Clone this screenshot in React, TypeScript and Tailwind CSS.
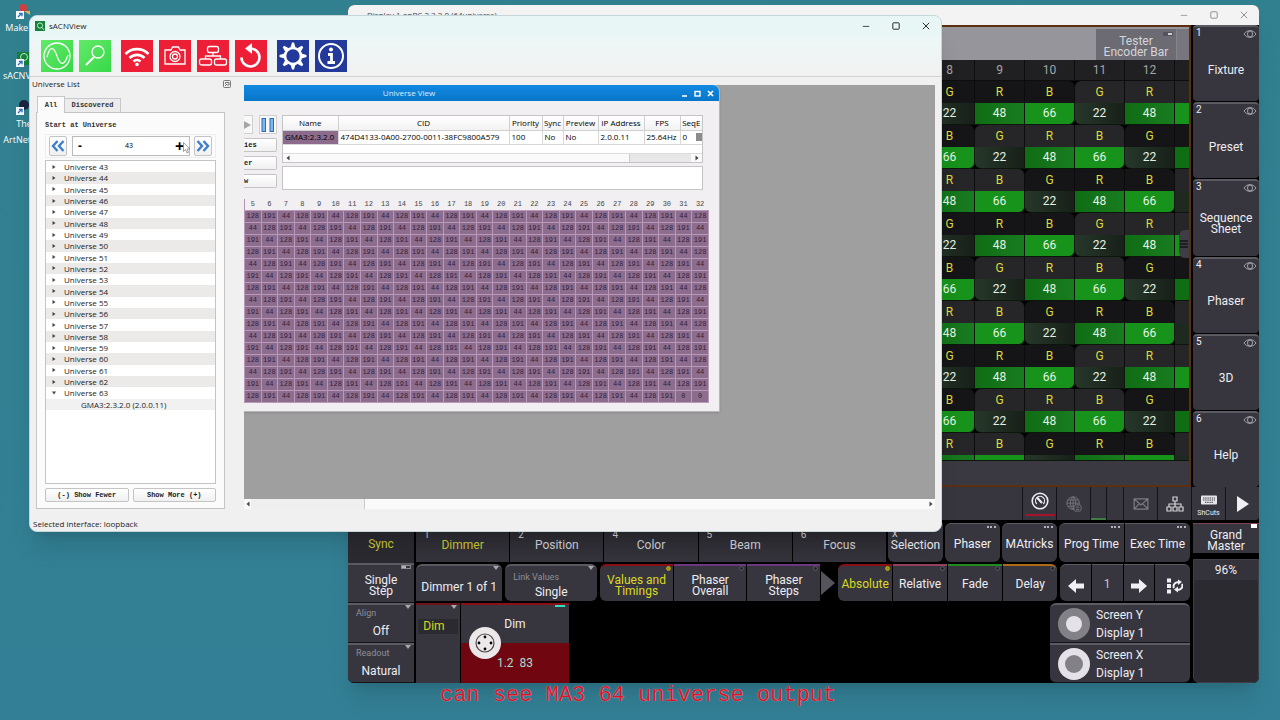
import { useState } from "react";
import type { ReactNode } from "react";
import clsx from "clsx";

const UNIVERSES = Array.from({ length: 21 }, (_, i) => 43 + i);
const LEVELS = [128, 191, 44];
const COLUMNS = Array.from({ length: 28 }, (_, i) => i + 5);
const ROWS = Array.from({ length: 16 }, (_, i) => i);

const SHEET_COLS = [8, 9, 10, 11, 12];
const SHEET_ROWS = [0, 1, 2, 3, 4, 5, 6, 7];
const CHANNELS = [
  { name: "G", value: 22 },
  { name: "R", value: 48 },
  { name: "B", value: 66 },
];

function dmxLevel(row: number, col: number) {
  if (row === 15 && col > 25) return 0;
  return LEVELS[(col - row + 15) % 3];
}

/* ---------- desktop ---------- */

function DesktopIcon({ label, children }: { label: ReactNode; children: ReactNode }) {
  return (
    <a href="#" className="flex w-12 flex-col items-center text-center text-[9px] leading-4 text-white">
      <svg viewBox="0 0 16 16" className="h-4 w-4">
        {children}
        <rect x="0" y="7" width="8" height="8" fill="#f4f8fb" />
        <path d="M2 13l3.5-3.5M3 9.300h3v3" stroke="#2d6fc0" strokeWidth="1.300" fill="none" />
      </svg>
      <span className="whitespace-nowrap">{label}</span>
    </a>
  );
}

function WindowControls({ className }: { className?: string }) {
  return (
    <div className={clsx("flex items-center", className)}>
      <button aria-label="Minimize" className="flex w-[30px] justify-center">
        <svg viewBox="0 0 10 10" className="h-2 w-2" fill="none" stroke="currentColor"><path d="M1 5.500h8" /></svg>
      </button>
      <button aria-label="Maximize" className="flex w-[30px] justify-center">
        <svg viewBox="0 0 10 10" className="h-2 w-2" fill="none" stroke="currentColor" strokeWidth="1.200"><rect x="1" y="1" width="8" height="8" rx="1" /></svg>
      </button>
      <button aria-label="Close" className="flex w-[30px] justify-center">
        <svg viewBox="0 0 10 10" className="h-2 w-2" fill="none" stroke="currentColor" strokeWidth="1.200"><path d="M1 1l8 8M9 1l-8 8" /></svg>
      </button>
    </div>
  );
}

/* ---------- lighting console ---------- */

function ViewButton({ index, label }: { index: number; label: string }) {
  return (
    <button className="relative flex flex-1 items-center justify-center rounded-sm border-t-2 border-[#5c5b63] bg-[#37363f] px-2 pt-3 text-xs leading-[11px]">
      <span className="absolute left-[3px] top-0 text-[10px] leading-3">{index}</span>
      <svg viewBox="0 0 14 10" className="absolute right-0.5 top-0.5 h-2.5 w-3.5" fill="none" stroke="#a4a3aa">
        <path d="M1 5c3-4.500 9-4.500 12 0c-3 4.500-9 4.500-12 0z" />
        <ellipse cx="7" cy="5" rx="2.500" ry="3" />
      </svg>
      {label}
    </button>
  );
}

const GREENS: Record<number, string> = {
  22: "bg-linear-to-r from-[#26382a] to-[#182019]",
  48: "bg-linear-to-r from-[#0f6d14] to-[#197c20]",
  66: "bg-[#17921b]",
};

function FixtureSheet() {
  return (
    <table className="ml-auto w-[264px] table-fixed border-separate border-spacing-0 text-center text-xs">
      <thead>
        <tr className="h-[21px] bg-[#202022] font-normal text-[#a5a5a5]">
          {SHEET_COLS.map((col) => (
            <th key={col} className="w-[50px] border-r border-b border-[#0d0d0d] p-0 font-normal leading-5">{col}</th>
          ))}
          <th className="border-b border-[#0d0d0d] p-0" />
        </tr>
      </thead>
      <tbody>
        {SHEET_ROWS.concat(8).map((row) => [
          <tr key={`name-${row}`} className="h-[22px] text-[#dcda3c]">
            {SHEET_COLS.map((col, i) => {
              const channel = (i - row + 9) % 3;
              const lit = [i > 2, i > 0 && i < 4, i < 2][row % 3];
              return (
                <td
                  key={col}
                  className={clsx(
                    "border-r border-[#0c0c0c] p-0 leading-[22px]",
                    lit ? "bg-[#262528]" : "bg-[#151416]",
                    channel === 0 && "rounded-tl-md",
                    channel === 2 && "rounded-tr-md"
                  )}
                >
                  {CHANNELS[channel].name}
                </td>
              );
            })}
            <td className={clsx("p-0", row % 3 === 1 ? "bg-[#151416]" : "bg-[#262528]")} />
          </tr>,
          <tr key={`value-${row}`} className={clsx("text-[#e4f2e4]", row === 8 ? "h-1.5" : "h-[22px]")}>
            {SHEET_COLS.map((col, i) => {
              const channel = (i - row + 9) % 3;
              const { value } = CHANNELS[channel];
              return (
                <td
                  key={col}
                  className={clsx(
                    "border-r border-b border-[#0c160c] p-0 leading-[21px]",
                    GREENS[value],
                    channel === 0 && row !== 8 && "rounded-bl-md",
                    channel === 2 && row !== 8 && "rounded-br-md"
                  )}
                >
                  {row === 8 ? null : value}
                </td>
              );
            })}
            <td className={clsx("border-b border-[#0c160c] p-0", row % 3 === 2 ? "bg-[#1e2a20]" : row % 3 === 0 ? "bg-[#17921b]" : "bg-[#0f6d14]")} />
          </tr>,
        ])}
      </tbody>
    </table>
  );
}

function StatusCell({ className, label, children }: { className?: string; label: string; children?: ReactNode }) {
  return (
    <button aria-label={label} className={clsx("flex flex-col items-center justify-center bg-[#37363f]", className)}>
      {children}
    </button>
  );
}

function StatusBar() {
  return (
    <div className="flex h-[33px] gap-px bg-[#141318]">
      <div className="flex-1 bg-[#37363f]" />
      <StatusCell label="Clock" className="relative w-[33px] pb-1.5">
        <svg viewBox="0 0 18 18" className="h-[18px] w-[18px]" fill="none" stroke="#eeeef2" strokeWidth="1.600">
          <circle cx="9" cy="9" r="7.800" />
          <path d="M5.800 12a4.500 4.500 0 1 1 6.500 0" strokeWidth="1.200" />
          <path d="M6 5.500l5 5.500" strokeWidth="2.200" />
        </svg>
        <span className="absolute bottom-1 h-0.5 w-[30px] bg-[#a5142a]" />
      </StatusCell>
      <StatusCell label="World" className="w-[33px]">
        <svg viewBox="0 0 18 18" className="h-4 w-4" fill="none" stroke="#73727b" strokeWidth="1.100">
          <circle cx="8" cy="8" r="7" />
          <ellipse cx="8" cy="8" rx="3" ry="7" />
          <path d="M1 8h14M2 4.500h12M2 11.500h12M8 1v14" />
          <rect x="9" y="10" width="8" height="7" rx="2" fill="#37363f" />
          <path d="M11 12.500h4M11 15h4" />
        </svg>
      </StatusCell>
      <div className="flex w-[15px] items-end bg-[#37363f]"><span className="h-0.5 w-full bg-[#3f7d42]" /></div>
      <div className="w-4 bg-[#37363f]" />
      <StatusCell label="Messages" className="w-[33px]">
        <svg viewBox="0 0 18 14" className="h-3 w-4" fill="none" stroke="#7d7c85" strokeWidth="1.400">
          <path d="M1 1h16v12H1zM1 1l8 7l8-7M1 13l6-6.500M17 13l-6-6.500" />
        </svg>
      </StatusCell>
      <StatusCell label="Network" className="w-[33px]">
        <svg viewBox="0 0 18 16" className="h-4 w-[18px]" fill="none" stroke="#d5d4da" strokeWidth="1.200">
          <path d="M7 1h4v4H7zM9 5v6M3 11V8h12v3" />
          <path d="M1 11h4v4H1zM7 11h4v4H7zM13 11h4v4h-4z" />
        </svg>
      </StatusCell>
      <StatusCell label="Shortcuts" className="w-[33px] gap-1 pt-1">
        <svg viewBox="0 0 18 10" className="h-2.5 w-[18px]">
          <rect x="1" y="0.500" width="16" height="9" rx="1" fill="#e6e5ea" />
          <path d="M3 3h12M3 5h12M5 7.300h8" stroke="#37363f" strokeDasharray="1.400 0.800" />
        </svg>
        <span className="text-[7px] leading-2">ShCuts</span>
      </StatusCell>
      <StatusCell label="Play" className="w-[33px] rounded-br-sm">
        <svg viewBox="0 0 12 16" className="h-4 w-3"><path d="M0 0l12 8L0 16z" fill="#f0eff4" /></svg>
      </StatusCell>
    </div>
  );
}

const EncoderMark = ({ on }: { on?: boolean }) => (
  <svg viewBox="0 0 6 6" className="absolute right-0.5 top-0 h-[5px] w-[5px]">
    <circle cx="3" cy="3" r="2.300" fill={on ? "#9a8a10" : "#24232a"} stroke={on ? "#d8c820" : "#6c6b74"} strokeWidth="0.900" />
  </svg>
);

const Caret = () => (
  <svg viewBox="0 0 6 4" className="absolute right-[3px] top-0 h-1 w-1.5"><path d="M0 0h6L3 4z" fill="#a8a7ae" /></svg>
);

function Key({ className, children }: { className?: string; children: ReactNode }) {
  return (
    <button className={clsx("relative flex items-center justify-center whitespace-nowrap bg-[#37363f] pt-0.5 text-center text-xs leading-[11px]", className)}>
      {children}
    </button>
  );
}

function SideKey({ title, value }: { title: string; value: string }) {
  return (
    <button className="relative flex h-10 flex-col border-t-2 border-b border-t-[#5c5b63] border-b-[#141318] bg-[#37363f] pt-0.5">
      <Caret />
      <span className="w-full pl-2 text-left text-[9px] leading-3 text-[#8f8e96]">{title}</span>
      <span className="w-full pt-1 text-center text-xs leading-4">{value}</span>
    </button>
  );
}

function Dots() {
  return <span className="absolute right-1 top-0.5 h-0.5 w-[9px] border-t-2 border-dotted border-[#b5b4bc]" />;
}

function EncoderBar() {
  const tabs = ["Dimmer", "Position", "Color", "Beam", "Focus"];
  const features = [
    { label: "Values and\nTimings", color: "border-[#8a1018]", on: true },
    { label: "Phaser\nOverall", color: "border-[#6d3a82]" },
    { label: "Phaser\nSteps", color: "border-[#6d3a82]" },
  ];
  const layers = [
    { label: "Absolute", color: "border-[#8a1018]", on: true },
    { label: "Relative", color: "border-[#96405f]" },
    { label: "Fade", color: "border-[#1f8a20]" },
    { label: "Delay", color: "border-[#b06a14]" },
  ];
  return (
    <div className="flex min-w-0 flex-1 gap-0.5">
      <div className="flex w-[66px] flex-col">
        <button className="h-10 bg-[#2b2a31] pt-0.5 text-xs text-[#c9c832]">Sync</button>
        <button className="relative h-10 border-t-2 border-b border-t-[#5c5b63] border-b-[#141318] bg-[#37363f] pt-1 text-xs leading-[11px]">
          <span className="absolute right-[3px] top-0 h-1 w-2.5 border border-[#8c8b93] bg-linear-to-r from-[#b5b4bc] from-50% to-[#37363f] to-50%" />
          <span className="whitespace-pre">{"Single\nStep"}</span>
        </button>
        <SideKey title="Align" value="Off" />
        <SideKey title="Readout" value="Natural" />
      </div>

      <div className="flex min-w-0 flex-1 flex-col">
        <div className="flex h-[41px] gap-0.5 pb-0.5">
          <div className="flex flex-1 gap-px">
            {tabs.map((tab, i) => (
              <Key key={tab} className={clsx("flex-1 bg-linear-to-b from-[#29282f] to-[#36353d] pt-1.5", i === 0 ? "text-[#c9c832]" : "text-[#d0cfd5]")}>
                <span className="absolute left-2 top-1.5 text-[10px] text-[#d0cfd5]">{[1, 2, 4, 5, 6][i]}</span>
                {tab}
              </Key>
            ))}
          </div>
          <Key className="w-[55px] rounded-b-md pt-1.5"><span className="absolute left-1 top-1.5 text-[9px]">X</span>Selection</Key>
          <Key className="w-[55px] rounded-md border-t border-[#5c5b63]"><Dots />Phaser</Key>
          <Key className="w-[55px] rounded-md border-t border-[#5c5b63]"><Dots />MAtricks</Key>
          <div className="flex w-[131px] gap-px">
            <Key className="flex-1 rounded-l-md border-t border-[#5c5b63]"><Dots />Prog Time</Key>
            <Key className="flex-1 rounded-r-md border-t border-[#5c5b63]"><Dots />Exec Time</Key>
          </div>
        </div>

        <div className="flex h-[39px] gap-[3px] pb-0.5">
          <Key className="w-[87px] rounded-t-md border-t-2 border-[#5c5b63] pt-2"><Caret />Dimmer 1 of 1</Key>
          <Key className="min-w-[92px] flex-1 flex-col items-stretch gap-1 rounded-md border-t-2 border-[#5c5b63]">
            <Caret />
            <span className="pl-2 text-left text-[9px] leading-3 text-[#8f8e96]">Link Values</span>
            <span>Single</span>
          </Key>
          <div className="flex w-[237px] items-center gap-px">
            {features.map(({ label, color, on }) => (
              <Key key={label} className={clsx("h-full flex-1 border-t-2 pt-1 first:rounded-l-md", color, on && "bg-[#2a262b] text-[#dcda20]")}>
                <EncoderMark on={on} />
                <span className="whitespace-pre">{label}</span>
              </Key>
            ))}
            <svg viewBox="0 0 14 24" className="h-6 w-3.5"><path d="M0 0l14 12L0 24z" fill="#55545c" /></svg>
          </div>
          <div className="flex w-[221px] gap-px">
            {layers.map(({ label, color, on }) => (
              <Key key={label} className={clsx("flex-1 border-t-2 first:rounded-l-md last:rounded-r-md", color, on && "bg-[#2a262b] text-[#dcda20]")}>
                <EncoderMark on={on} />
                {label}
              </Key>
            ))}
          </div>
          <div className="flex w-[131px] gap-px">
            <Key className="flex-1 rounded-l-md border-t border-[#5c5b63] pt-1.5">
              <svg viewBox="0 0 16 14" className="h-3.5 w-4"><path d="M0 7l8-7v4.500h8v5H8V14z" fill="#f0eff4" /></svg>
            </Key>
            <Key className="flex-1 border-t border-[#5c5b63] text-[#c5c4ca]">1</Key>
            <Key className="flex-1 border-t border-[#5c5b63] pt-1.5">
              <svg viewBox="0 0 16 14" className="h-3.5 w-4"><path d="M16 7L8 0v4.500H0v5h8V14z" fill="#f0eff4" /></svg>
            </Key>
            <Key className="flex-1 rounded-r-md border-t border-[#5c5b63] pt-1.5 pl-1">
              <svg viewBox="0 0 16 16" className="h-4 w-4" fill="none" stroke="#f0eff4" strokeWidth="2">
                <path d="M0 0.500h4v4H0zM0 6h4v4H0zM0 11.500h4v4H0z" fill="#f0eff4" stroke="none" />
                <path d="M7 10a4 4 0 0 1 5-5.500M15 6a4 4 0 0 1-5 5.500" />
                <path d="M11 1.500l4 2.500l-4 3zM11 8.500l-4 3l4 3z" fill="#f0eff4" stroke="none" />
              </svg>
            </Key>
          </div>
        </div>

        <div className="flex h-20 gap-px">
          <Key className="w-11 flex-col justify-start border-t-2 border-[#6b121b] pt-3.5">
            <Caret />
            <span className="w-10 bg-[#2b2a31] py-0.5 pr-2 text-[#dcda20]">Dim</span>
          </Key>
          <button className="relative flex w-[108px] flex-col border-t-2 border-[#8a1018] bg-[#37363f] text-xs">
            <span className="absolute right-1 top-0 h-0.5 w-2.5 bg-[#2fe0c0]" />
            <span className="w-full pt-2.5 pb-2.5 text-center leading-[18px]">Dim</span>
            <span className="w-full flex-1 bg-[#700710] pt-3 text-center leading-4 text-[#a5dcd0]">1.2&nbsp; 83</span>
            <svg viewBox="0 0 34 34" className="absolute left-[7px] top-[21px] h-[34px] w-[34px]">
              <circle cx="17" cy="17" r="16" fill="#ece8ea" />
              <circle cx="17" cy="17" r="9" fill="none" stroke="#4a484e" strokeWidth="1.200" />
              <circle cx="17" cy="11" r="1.400" /><circle cx="17" cy="23" r="1.400" />
              <circle cx="11" cy="17" r="1.400" /><circle cx="23" cy="17" r="1.400" />
            </svg>
          </button>
          <div className="flex-1" />
          <div className="flex w-[140px] flex-col">
            {["Y", "X"].map((axis) => (
              <button key={axis} className="flex h-10 items-center gap-1.5 border-t-2 border-b border-t-[#5c5b63] border-b-[#141318] bg-[#37363f] pl-2 text-left text-xs leading-[18px] first:rounded-t-md last:rounded-b-md">
                <svg viewBox="0 0 32 32" className="h-8 w-8">
                  <circle cx="16" cy="16" r="16" fill={axis === "Y" ? "#828187" : "#e4e2e8"} />
                  <circle cx="16" cy="16" r={axis === "Y" ? 8 : 9} fill={axis === "Y" ? "#e4e2e8" : "#828187"} />
                </svg>
                <span>Screen {axis}<br />Display 1</span>
              </button>
            ))}
          </div>
        </div>
      </div>
    </div>
  );
}

function ConsoleWindow() {
  return (
    <section className="absolute top-[5px] right-[21px] bottom-[37px] left-[348px] flex flex-col overflow-hidden rounded-md bg-black font-[Roboto,sans-serif] text-[#eeedf2] shadow-xl">
      <header className="flex h-5 items-center justify-between bg-[#f4f3f4] pl-[19px] font-['Open_Sans',sans-serif] text-[8px] text-[#444]">
        <span>Display 1 onPC 2.3.2.0 (64universe)</span>
        <WindowControls className="text-[#8d8d8d]" />
      </header>
      <div className="flex min-h-0 flex-1 gap-0.5">
        <div className="flex flex-1 flex-col overflow-hidden border-2 border-l-0 border-[#5a3012] bg-[#3a3942]">
          <div className="flex h-[33px] justify-end bg-[#97959c] pt-0.5 text-xs leading-[11px] text-[#d5d4da]">
            <button className="relative w-20 bg-[#6c6b73] pt-1">
              <span className="absolute right-[3px] top-[3px] h-1 w-2.5 border border-[#55545c] bg-linear-to-r from-[#55545c] from-50% to-[#d0cfd5] to-50%" />
              <span className="whitespace-pre">{"Tester\nEncoder Bar"}</span>
            </button>
            <span className="w-[13px] border-l border-[#85848b] bg-[#77767e]" />
          </div>
          <div className="relative bg-black">
            <FixtureSheet />
            <span className="absolute top-[170px] right-0 flex h-7 w-2.5 items-center justify-center rounded-l-md bg-[#3f3e46] text-black">
              <svg viewBox="0 0 8 8" className="h-2 w-2" stroke="currentColor" strokeWidth="1.200"><path d="M0 1h8M0 4h8M0 7h8" /></svg>
            </span>
          </div>
        </div>
        <div className="flex w-[66px] flex-col gap-px">
          {["Fixture", "Preset", "Sequence Sheet", "Phaser", "3D", "Help"].map((label, i) => (
            <ViewButton key={label} index={i + 1} label={label} />
          ))}
        </div>
      </div>
      <StatusBar />
      <div className="mt-[3px] flex gap-[3px]">
        <EncoderBar />
        <div className="flex w-[66px] flex-col gap-1.5 text-center text-xs">
          <div className="relative h-[30px] border-t border-[#7c4450] bg-[#37363f] pt-1.5 leading-[11px]">
            <span className="absolute right-0.5 top-0 h-1 w-1.5 bg-white" />
            <span className="whitespace-pre">{"Grand\nMaster"}</span>
          </div>
          <div className="flex flex-1 flex-col rounded-b-md border border-[#3f3e46] bg-[#2b2a30]">
            <span className="bg-[#34333b] leading-5">96%</span>
          </div>
        </div>
      </div>
    </section>
  );
}

/* ---------- sACNView ---------- */

const GREEN_TOOL = "bg-linear-to-br from-[#62ea68] to-[#35d848]";

const TOOLS: { label: string; color: string; gap?: boolean; icon: ReactNode }[] = [
  { label: "Transmit", color: GREEN_TOOL, icon: <><circle cx="16" cy="16" r="13" /><path d="M6 17C9 5 13 7 16 16S23 27 27 15" /></> },
  { label: "Discover", color: GREEN_TOOL, icon: <><circle cx="19" cy="12" r="6" /><path d="M15 17l-8 8" strokeWidth="2" /></> },
  { label: "Multiverse", color: "bg-[#ec1f36]", gap: true, icon: <><path d="M4.500 14a16 16 0 0 1 23 0M8.500 18a10.500 10.500 0 0 1 15 0M12.500 21.500a5 5 0 0 1 7 0" strokeWidth="2.600" /><circle cx="16" cy="24.500" r="1.800" fill="white" stroke="none" /></> },
  { label: "Snapshot", color: "bg-[#ec1f36]", icon: <><path d="M6 10h6l1.500-3h6L21 10h5v14H6z" /><circle cx="16" cy="16.500" r="5" /><circle cx="16" cy="16.500" r="2.500" /></> },
  { label: "Network", color: "bg-[#ec1f36]", icon: <><rect x="10.500" y="6.500" width="11" height="6" rx="2" /><rect x="2.500" y="19" width="12" height="6" rx="2" /><rect x="17.500" y="19" width="12" height="6" rx="2" /><path d="M16 12.500V16M8.500 19v-3h15v3" /></> },
  { label: "Reset", color: "bg-[#ec1f36]", icon: <><path d="M14.500 8.500a9 9 0 1 1-8 9" strokeWidth="2.600" /><path d="M17 3v11L10 8.500z" fill="white" stroke="none" /></> },
  {
    label: "Settings",
    color: "bg-[#243a9a]",
    gap: true,
    icon: (
      <>
        <circle cx="16" cy="16" r="8" strokeWidth="2.600" />
        {[0, 45, 90, 135, 180, 225, 270, 315].map((a) => (
          <path key={a} d="M13.500 7.500L15 2.500h2l1.500 5z" fill="white" stroke="none" transform={`rotate(${a} 16 16)`} />
        ))}
      </>
    ),
  },
  { label: "About", color: "bg-[#243a9a]", icon: <><circle cx="16" cy="16" r="12" strokeWidth="2" /><circle cx="16" cy="9.500" r="2" fill="white" stroke="none" /><path d="M13 14.500h3.500V22M12.500 22.500h7.500" strokeWidth="2.800" /></> },
];

function Chevrons({ flip }: { flip?: boolean }) {
  return (
    <svg viewBox="0 0 14 12" className={clsx("h-3 w-3.5", flip && "rotate-180")} fill="none" stroke="#3f7ecb" strokeWidth="2.400">
      <path d="M6.500 1L2 6l4.500 5M12.500 1L8 6l4.500 5" />
    </svg>
  );
}

const pushButton = "rounded-xs border border-[#c4c4c4] bg-linear-to-b from-white to-[#f0f0f0]";

function UniverseList() {
  const [start, setStart] = useState(43);
  return (
    <aside className="flex w-[195px] flex-col pt-px pl-0.5">
      <div className="flex h-3 items-center justify-between">
        <h2>Universe List</h2>
        <button aria-label="Float" className="-mr-1.5">
          <svg viewBox="0 0 8 8" className="h-2 w-2" fill="none" stroke="#777"><rect x="0.500" y="0.500" width="7" height="7" rx="1" /><path d="M2.500 4V2.500H6V5H4M2 6l2-2" /></svg>
        </button>
      </div>
      <div className="mt-1.5 flex items-end pl-[5px] font-['Liberation_Mono',monospace] text-[7px] font-bold text-[#333]">
        <button className="relative -mb-px h-[17px] w-7 border border-b-0 border-[#c8c8c8] bg-[#fbfbfb]">All</button>
        <button className="h-3.5 w-[56px] border border-b-0 border-l-0 border-[#c8c8c8] bg-[#ececec]">Discovered</button>
      </div>
      <div className="ml-1 flex flex-1 flex-col border border-[#c4c4c4] bg-[#fbfbfb] px-2 pt-2 pb-1.5">
        <label htmlFor="start-universe" className="font-['Liberation_Mono',monospace] text-[7px] leading-2 font-bold text-[#333]">Start at Universe</label>
        <div className="mt-[5px] flex h-6 items-center justify-between border border-[#eee] px-[3px]">
          <button aria-label="Previous page" className={clsx("flex h-5 w-[18px] items-center justify-center", pushButton)} onClick={() => setStart(start - 20)}><Chevrons /></button>
          <div className="flex h-5 w-[118px] items-center border border-[#bbb] bg-white text-black">
            <button aria-label="Decrease" className="w-[15px] text-xs leading-4 font-bold" onClick={() => setStart(start - 1)}>-</button>
            <input id="start-universe" value={start} onChange={(e) => setStart(Number(e.target.value) || 1)} className="min-w-0 flex-1 text-center text-[7px] outline-none" />
            <button aria-label="Increase" className="w-[18px] text-base leading-4 font-bold" onClick={() => setStart(start + 1)}>+</button>
          </div>
          <button aria-label="Next page" className={clsx("flex h-5 w-[18px] items-center justify-center", pushButton)} onClick={() => setStart(start + 20)}><Chevrons flip /></button>
        </div>
        <div className="mt-0.5 flex-1 border border-[#c4c4c4] bg-white">
          <ul className="flex h-[249px] flex-col">
            {UNIVERSES.map((universe) => (
              <li key={universe} className="flex flex-1 items-center gap-2 pl-1.5 leading-[11px] even:bg-[#ebeae9]">
                <svg viewBox="0 0 4 4" className={clsx("h-1 w-1", universe === 63 && "rotate-90")}><path d="M0.500 0L3.500 2L0.500 4z" fill="#444" /></svg>
                Universe {universe}
              </li>
            ))}
            <li className="flex-1 bg-[#f1f1f2] pl-[35px] leading-[11px]">GMA3:2.3.2.0 (2.0.0.11)</li>
          </ul>
        </div>
        <div className="mt-1 flex gap-1 font-['Liberation_Mono',monospace] text-[7px] font-bold">
          <button className={clsx("h-3.5 flex-1", pushButton)}>(-) Show Fewer</button>
          <button className={clsx("h-3.5 flex-1", pushButton)}>Show More (+)</button>
        </div>
      </div>
    </aside>
  );
}

const SOURCE_COLUMNS = [
  { title: "Name", value: "GMA3:2.3.2.0", width: "w-[55px]" },
  { title: "CID", value: "474D4133-0A00-2700-0011-38FC9800A579", width: "w-[171px]" },
  { title: "Priority", value: "100", width: "w-[33px]" },
  { title: "Sync", value: "No", width: "w-[21px]" },
  { title: "Preview", value: "No", width: "w-[35px]" },
  { title: "IP Address", value: "2.0.0.11", width: "w-[46px]" },
  { title: "FPS", value: "25.64Hz", width: "w-[36px]" },
  { title: "SeqE", value: "0", width: "w-[22px]" },
];

function ScrollArrow({ flip }: { flip?: boolean }) {
  return <svg viewBox="0 0 4 6" className={clsx("h-1.5 w-1", flip && "rotate-180")}><path d="M3.500 0.500v5L0.500 3z" fill="#444" /></svg>;
}

function UniverseView() {
  return (
    <section className="w-[476px] rounded-tr-md border-r border-b border-[#b5b5b5] bg-[#f1eff1] pb-2 shadow-sm">
      <header className="flex h-4 items-center justify-between rounded-tr-md bg-linear-to-b from-[#1289e2] to-[#0876c8] pr-[5px] text-[#dcefff]">
        <h2 className="w-[330px] text-center leading-4">Universe View</h2>
        <div className="flex gap-1.5">
          <button aria-label="Minimize view"><svg viewBox="0 0 7 7" className="h-[7px] w-[7px]"><path d="M1 6h5" stroke="white" strokeWidth="1.500" /></svg></button>
          <button aria-label="Maximize view"><svg viewBox="0 0 7 7" className="h-[7px] w-[7px]" fill="none"><rect x="1" y="1.500" width="5" height="4.500" stroke="white" strokeWidth="1.400" /></svg></button>
          <button aria-label="Close view"><svg viewBox="0 0 7 7" className="h-[7px] w-[7px]"><path d="M1 1l5 5M6 1L1 6" stroke="white" strokeWidth="1.700" /></svg></button>
        </div>
      </header>
      <div className="mt-3.5 flex gap-[5px] pr-4">
        <div className="flex w-[33px] flex-col gap-1 font-['Liberation_Mono',monospace] text-[7px] font-bold">
          <div className="flex h-[19px] justify-between">
            <button aria-label="Start" className="flex w-[9px] items-center border border-l-0 border-[#d0d0d0] bg-[#f8f8f8]"><svg viewBox="0 0 7 8" className="h-2 w-[7px]"><path d="M0 0l7 4l-7 4z" fill="#a5a5a5" /></svg></button>
            <button aria-label="Pause" className="flex w-[18px] items-center justify-center border border-[#d0d0d0] bg-[#f8f8f8]">
              <svg viewBox="0 0 14 14" className="h-3.5 w-3.5" fill="#7db7ee" stroke="#2b6cb8"><rect x="1" y="0.500" width="3.500" height="13" /><rect x="9" y="0.500" width="3.500" height="13" /></svg>
            </button>
          </div>
          {["ies", "er", "w"].map((label) => (
            <button key={label} className={clsx("h-3.5 rounded-l-none border-l-0 text-left", pushButton)}>{label}</button>
          ))}
        </div>
        <div className="flex min-w-0 flex-1 flex-col gap-[3px]">
          <div className="border border-[#c4c4c4] bg-white">
            <table className="w-full table-fixed border-collapse text-black">
              <thead>
                <tr className="h-3.5 bg-linear-to-b from-white to-[#f2f2f2]">
                  {SOURCE_COLUMNS.map(({ title, width }) => (
                    <th key={title} className={clsx("overflow-hidden border-r border-b border-[#d0d0d0] p-0 leading-3 font-normal whitespace-nowrap last:border-r-0", width)}>{title}</th>
                  ))}
                </tr>
              </thead>
              <tbody>
                <tr className="h-3.5">
                  {SOURCE_COLUMNS.map(({ title, value }) => (
                    <td key={title} className="border-r border-b border-[#d8d8d8] p-0 pl-0.5 leading-3 whitespace-nowrap first:bg-[#8c6b8c] last:border-r-0">
                      {title === "SeqE" ? <span className="flex items-center justify-between">{value}<span className="h-2 w-1.5 bg-[#8c8c8c]" /></span> : value}
                    </td>
                  ))}
                </tr>
              </tbody>
            </table>
            <div className="mt-2 flex h-[9px] items-center justify-between border-t border-[#ddd] bg-[#fafafa] px-[3px]">
              <ScrollArrow />
              <span className="mr-1 ml-auto h-full w-[62px] border-l border-[#ccc] bg-[#e7e7e7]" />
              <ScrollArrow flip />
            </div>
          </div>
          <textarea aria-label="Channel info" className="h-6 resize-none border border-[#c4c4c4] bg-white" readOnly />
        </div>
      </div>
      <div className="pr-2.5">
        <table className="mt-[9px] w-full table-fixed border-collapse bg-[#b591b4] text-center font-['Liberation_Mono',monospace] text-[7px]">
          <thead>
            <tr className="h-3 bg-[#f1eff1] text-[#444]">
              {COLUMNS.map((col) => <th key={col} className="p-0 leading-[11px] font-normal">{col}</th>)}
            </tr>
          </thead>
          <tbody>
            {ROWS.map((row) => (
              <tr key={row} className="h-3">
                {COLUMNS.map((col, i) => (
                  <td key={col} className="border border-[#ba98b9] bg-[#8d6d8e] p-0 leading-[11px] text-[#33203a]">{dmxLevel(row, i)}</td>
                ))}
              </tr>
            ))}
          </tbody>
        </table>
      </div>
    </section>
  );
}

function SacnWindow() {
  return (
    <section className="absolute top-[15px] right-[338px] bottom-[188px] left-[29px] flex flex-col overflow-hidden rounded-lg border border-[#c5d5d8] bg-[#f0f0f0] font-['Open_Sans',sans-serif] text-[8px] text-[#222] shadow-xl">
      <header className="flex h-[19px] items-center gap-1 bg-[#e9f6f6] pl-[5px]">
        <svg viewBox="0 0 10 10" className="h-2.5 w-2.5" fill="none" stroke="#b9f0c5">
          <rect width="10" height="10" fill="#16813b" stroke="none" />
          <circle cx="5" cy="4.500" r="2.600" /><path d="M7 6.500L9 9" />
        </svg>
        <h1 className="flex-1">sACNView</h1>
        <WindowControls className="text-[#222]" />
      </header>
      <nav className="flex h-[42px] items-start gap-1.5 border-b border-[#d2d2d2] bg-linear-to-b from-[#edf7f7] to-[#f1f1f1] pt-[5px] pl-[11px]">
        {TOOLS.map(({ label, color, gap, icon }) => (
          <button key={label} aria-label={label} className={clsx("h-8 w-8", color, gap && "ml-1")}>
            <svg viewBox="0 0 32 32" className="h-8 w-8" fill="none" stroke="#fff" strokeWidth="1.300">{icon}</svg>
          </button>
        ))}
      </nav>
      <div className="flex min-h-0 flex-1 gap-[19px]">
        <UniverseList />
        <div className="mr-1.5 flex min-w-0 flex-1 flex-col pt-2">
          <div className="flex-1 overflow-hidden bg-[#9f9f9f]">
            <UniverseView />
          </div>
          <div className="flex h-2.5 items-center justify-between bg-[#fafafa] px-0.5">
            <ScrollArrow />
            <span className="mr-auto ml-px h-full w-[114px] border-r border-[#ccc] bg-[#efefef]" />
            <ScrollArrow flip />
          </div>
        </div>
      </div>
      <footer className="flex h-[22px] items-center pt-2 pl-[3px]">Selected interface: loopback</footer>
    </section>
  );
}

export default function App() {
  return (
    <main className="relative min-h-screen overflow-hidden bg-linear-to-b from-[#31808f] to-[#337f95]">
      <nav className="flex w-12 flex-col gap-4 pt-1 font-['Open_Sans',sans-serif]">
        <DesktopIcon label="MakePro"><circle cx="7" cy="4" r="4" fill="#cf3f3f" /><path d="M8 7h6v4z" fill="#e5b457" /></DesktopIcon>
        <DesktopIcon label="sACNView"><rect x="1" y="0" width="13" height="13" fill="#16813b" /><circle cx="8" cy="5" r="3.500" fill="none" stroke="#b9f0c5" /></DesktopIcon>
        <DesktopIcon label={<>The<br />ArtNetom</>}><circle cx="8" cy="5" r="5" fill="#1c2440" /></DesktopIcon>
      </nav>
      <ConsoleWindow />
      <SacnWindow />
      <svg viewBox="0 0 8 12" className="absolute top-[142px] left-[183px] h-3 w-2"><path d="M0.500 0.500v9l2-2l1.500 3.500l1.500-0.700l-1.500-3.300h3z" fill="#fff" stroke="#777" strokeWidth="0.700" /></svg>
      <p className="absolute inset-x-0 bottom-2 pr-1 text-center font-['Liberation_Mono',monospace] text-[22px] leading-8 text-[#d9152c] [text-shadow:0_0_1px_#f3c8d0]">can see MA3 64 universe output</p>
    </main>
  );
}
